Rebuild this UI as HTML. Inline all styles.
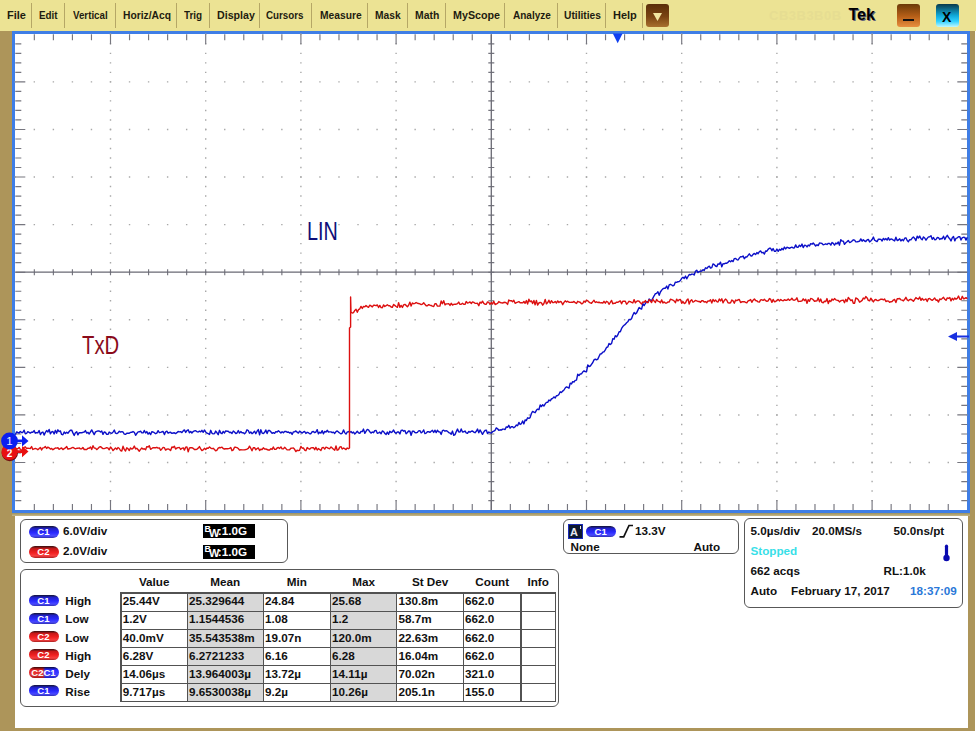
<!DOCTYPE html>
<html><head><meta charset="utf-8">
<style>
*{margin:0;padding:0;box-sizing:border-box}
html,body{width:976px;height:732px;overflow:hidden;background:#fff}
body{position:relative;font-family:"Liberation Sans",sans-serif;color:#000}
.a{position:absolute}
.mi{position:absolute;top:9px;font-size:11px;font-weight:bold;line-height:13px;color:#1e1c10;white-space:nowrap;transform:scaleX(0.9);transform-origin:0 0}
.sep{position:absolute;top:3px;width:1px;height:25px;background:#b5a766}
.btn{position:absolute;top:4px;width:23px;height:23px;border-radius:3px}
.panel{position:absolute;border:1.4px solid #585858;border-radius:6px}
.b{position:absolute;font-weight:bold;font-size:11.7px;line-height:13px;white-space:nowrap;color:#111}
.pill{position:absolute;left:28.5px;width:30px;height:11px;border-radius:6px;color:#fff;font-weight:bold;font-size:9.5px;line-height:11px;text-align:center;letter-spacing:0.3px}
.pb{background:linear-gradient(#141430 0%,#2020c8 22%,#2828ff 55%,#4a4aff 82%,#3030b0 100%)}
.pr{background:linear-gradient(#301010 0%,#c81818 22%,#f02020 55%,#f84040 82%,#a82020 100%)}
.vl{position:absolute;width:1.4px;background:#525252}
.hl{position:absolute;height:1.4px;background:#525252}
.gray{position:absolute;background:#d8d8d8}
</style></head><body>
<div class="a" style="left:0;top:0;width:976px;height:31px;background:#ece394"></div>
<!-- brown frame -->
<div class="a" style="left:0;top:31px;width:12px;height:700px;background:#ad955a"></div>
<div class="a" style="left:0;top:513px;width:15px;height:218px;background:#ad955a"></div>
<div class="a" style="left:970px;top:31px;width:5px;height:700px;background:#ad955a"></div>
<div class="a" style="left:967.5px;top:513px;width:7.5px;height:218px;background:#ad955a"></div>
<div class="a" style="left:0;top:727.7px;width:975px;height:3.1px;background:#ad955a"></div>
<!-- blue graticule frame -->
<div class="a" style="left:12px;top:31px;width:958px;height:482px;border:3px solid #3f7ee6;background:#fff"></div>
<div class="a" style="left:12px;top:513px;width:958px;height:2.5px;background:linear-gradient(#9a9060,#c8b888)"></div>

<!-- menu -->
<span class="mi" style="left:7px;transform:scaleX(1.0)">File</span>
<div class="sep" style="left:31px"></div>
<span class="mi" style="left:39px;transform:scaleX(0.895)">Edit</span>
<div class="sep" style="left:64px"></div>
<span class="mi" style="left:72.5px;transform:scaleX(0.885)">Vertical</span>
<div class="sep" style="left:115px"></div>
<span class="mi" style="left:123px;transform:scaleX(0.934)">Horiz/Acq</span>
<div class="sep" style="left:176px"></div>
<span class="mi" style="left:184px;transform:scaleX(0.9)">Trig</span>
<div class="sep" style="left:209px"></div>
<span class="mi" style="left:216.5px;transform:scaleX(0.966)">Display</span>
<div class="sep" style="left:259px"></div>
<span class="mi" style="left:265.5px;transform:scaleX(0.89)">Cursors</span>
<div class="sep" style="left:311px"></div>
<span class="mi" style="left:319.5px;transform:scaleX(0.935)">Measure</span>
<div class="sep" style="left:367px"></div>
<span class="mi" style="left:375px;transform:scaleX(0.93)">Mask</span>
<div class="sep" style="left:407px"></div>
<span class="mi" style="left:415px;transform:scaleX(0.945)">Math</span>
<div class="sep" style="left:445px"></div>
<span class="mi" style="left:453px;transform:scaleX(0.975)">MyScope</span>
<div class="sep" style="left:504px"></div>
<span class="mi" style="left:512.5px;transform:scaleX(0.912)">Analyze</span>
<div class="sep" style="left:557px"></div>
<span class="mi" style="left:563.5px;transform:scaleX(0.93)">Utilities</span>
<div class="sep" style="left:605px"></div>
<span class="mi" style="left:613px;transform:scaleX(1.0)">Help</span>
<div class="sep" style="left:642px"></div>
<div class="btn" style="left:646px;width:23px;background:linear-gradient(#5a2e08,#7a4412 55%,#a8702e)"></div>
<svg class="a" style="left:646px;top:4px" width="23" height="23"><path d="M7 9h9l-4.5 8z" fill="#f2e6a0"/></svg>
<span class="a" style="left:769px;top:8px;font-size:13px;font-weight:bold;color:#e6dd92;letter-spacing:0.5px">CB3B3B0B</span>
<span class="a" style="left:848.5px;top:6.3px;font-size:16px;font-weight:bold;color:#000;text-shadow:1px 1px 0 #60607a">Tek</span>
<div class="btn" style="left:897px;background:linear-gradient(#6b3a08,#b86018 55%,#e89040)"></div>
<div class="a" style="left:903px;top:18.8px;width:11px;height:2.2px;background:#111"></div>
<div class="btn" style="left:936px;background:linear-gradient(#0a3a4a,#10a8d8 50%,#30d0ff 75%,#c0f8ff)"></div>
<span class="a" style="left:942px;top:8.5px;font-size:14px;font-weight:bold;color:#000">X</span>

<!-- graticule svg -->
<svg class="a" style="left:0;top:0" width="976" height="732">
<path d="M110.50 33.60V510.10M205.70 33.60V510.10M300.90 33.60V510.10M396.10 33.60V510.10M586.50 33.60V510.10M681.70 33.60V510.10M776.90 33.60V510.10M872.10 33.60V510.10" stroke="#a8a8a8" stroke-width="1.4" stroke-dasharray="1.4 8.116" fill="none"/>
<path d="M14.60 81.88H967.30M14.60 129.46H967.30M14.60 177.04H967.30M14.60 224.62H967.30M14.60 319.78H967.30M14.60 367.36H967.30M14.60 414.94H967.30M14.60 462.52H967.30" stroke="#a8a8a8" stroke-width="1.4" stroke-dasharray="1.4 17.640" fill="none"/>
<path d="M34.34 34.3v6M34.34 510.1v-6M34.34 269.20v6M53.38 34.3v6M53.38 510.1v-6M53.38 269.20v6M72.42 34.3v6M72.42 510.1v-6M72.42 269.20v6M91.46 34.3v6M91.46 510.1v-6M91.46 269.20v6M110.50 34.3v10M110.50 510.1v-10M110.50 269.20v6M129.54 34.3v6M129.54 510.1v-6M129.54 269.20v6M148.58 34.3v6M148.58 510.1v-6M148.58 269.20v6M167.62 34.3v6M167.62 510.1v-6M167.62 269.20v6M186.66 34.3v6M186.66 510.1v-6M186.66 269.20v6M205.70 34.3v10M205.70 510.1v-10M205.70 269.20v6M224.74 34.3v6M224.74 510.1v-6M224.74 269.20v6M243.78 34.3v6M243.78 510.1v-6M243.78 269.20v6M262.82 34.3v6M262.82 510.1v-6M262.82 269.20v6M281.86 34.3v6M281.86 510.1v-6M281.86 269.20v6M300.90 34.3v10M300.90 510.1v-10M300.90 269.20v6M319.94 34.3v6M319.94 510.1v-6M319.94 269.20v6M338.98 34.3v6M338.98 510.1v-6M338.98 269.20v6M358.02 34.3v6M358.02 510.1v-6M358.02 269.20v6M377.06 34.3v6M377.06 510.1v-6M377.06 269.20v6M396.10 34.3v10M396.10 510.1v-10M396.10 269.20v6M415.14 34.3v6M415.14 510.1v-6M415.14 269.20v6M434.18 34.3v6M434.18 510.1v-6M434.18 269.20v6M453.22 34.3v6M453.22 510.1v-6M453.22 269.20v6M472.26 34.3v6M472.26 510.1v-6M472.26 269.20v6M491.30 34.3v10M491.30 510.1v-10M491.30 269.20v6M510.34 34.3v6M510.34 510.1v-6M510.34 269.20v6M529.38 34.3v6M529.38 510.1v-6M529.38 269.20v6M548.42 34.3v6M548.42 510.1v-6M548.42 269.20v6M567.46 34.3v6M567.46 510.1v-6M567.46 269.20v6M586.50 34.3v10M586.50 510.1v-10M586.50 269.20v6M605.54 34.3v6M605.54 510.1v-6M605.54 269.20v6M624.58 34.3v6M624.58 510.1v-6M624.58 269.20v6M643.62 34.3v6M643.62 510.1v-6M643.62 269.20v6M662.66 34.3v6M662.66 510.1v-6M662.66 269.20v6M681.70 34.3v10M681.70 510.1v-10M681.70 269.20v6M700.74 34.3v6M700.74 510.1v-6M700.74 269.20v6M719.78 34.3v6M719.78 510.1v-6M719.78 269.20v6M738.82 34.3v6M738.82 510.1v-6M738.82 269.20v6M757.86 34.3v6M757.86 510.1v-6M757.86 269.20v6M776.90 34.3v10M776.90 510.1v-10M776.90 269.20v6M795.94 34.3v6M795.94 510.1v-6M795.94 269.20v6M814.98 34.3v6M814.98 510.1v-6M814.98 269.20v6M834.02 34.3v6M834.02 510.1v-6M834.02 269.20v6M853.06 34.3v6M853.06 510.1v-6M853.06 269.20v6M872.10 34.3v10M872.10 510.1v-10M872.10 269.20v6M891.14 34.3v6M891.14 510.1v-6M891.14 269.20v6M910.18 34.3v6M910.18 510.1v-6M910.18 269.20v6M929.22 34.3v6M929.22 510.1v-6M929.22 269.20v6M948.26 34.3v6M948.26 510.1v-6M948.26 269.20v6M15.3 43.82h6M967.3 43.82h-6M488.30 43.82h6M15.3 53.33h6M967.3 53.33h-6M488.30 53.33h6M15.3 62.85h6M967.3 62.85h-6M488.30 62.85h6M15.3 72.36h6M967.3 72.36h-6M488.30 72.36h6M15.3 81.88h10M967.3 81.88h-10M488.30 81.88h6M15.3 91.40h6M967.3 91.40h-6M488.30 91.40h6M15.3 100.91h6M967.3 100.91h-6M488.30 100.91h6M15.3 110.43h6M967.3 110.43h-6M488.30 110.43h6M15.3 119.94h6M967.3 119.94h-6M488.30 119.94h6M15.3 129.46h10M967.3 129.46h-10M488.30 129.46h6M15.3 138.98h6M967.3 138.98h-6M488.30 138.98h6M15.3 148.49h6M967.3 148.49h-6M488.30 148.49h6M15.3 158.01h6M967.3 158.01h-6M488.30 158.01h6M15.3 167.52h6M967.3 167.52h-6M488.30 167.52h6M15.3 177.04h10M967.3 177.04h-10M488.30 177.04h6M15.3 186.56h6M967.3 186.56h-6M488.30 186.56h6M15.3 196.07h6M967.3 196.07h-6M488.30 196.07h6M15.3 205.59h6M967.3 205.59h-6M488.30 205.59h6M15.3 215.10h6M967.3 215.10h-6M488.30 215.10h6M15.3 224.62h10M967.3 224.62h-10M488.30 224.62h6M15.3 234.14h6M967.3 234.14h-6M488.30 234.14h6M15.3 243.65h6M967.3 243.65h-6M488.30 243.65h6M15.3 253.17h6M967.3 253.17h-6M488.30 253.17h6M15.3 262.68h6M967.3 262.68h-6M488.30 262.68h6M15.3 272.20h10M967.3 272.20h-10M488.30 272.20h6M15.3 281.72h6M967.3 281.72h-6M488.30 281.72h6M15.3 291.23h6M967.3 291.23h-6M488.30 291.23h6M15.3 300.75h6M967.3 300.75h-6M488.30 300.75h6M15.3 310.26h6M967.3 310.26h-6M488.30 310.26h6M15.3 319.78h10M967.3 319.78h-10M488.30 319.78h6M15.3 329.30h6M967.3 329.30h-6M488.30 329.30h6M15.3 338.81h6M967.3 338.81h-6M488.30 338.81h6M15.3 348.33h6M967.3 348.33h-6M488.30 348.33h6M15.3 357.84h6M967.3 357.84h-6M488.30 357.84h6M15.3 367.36h10M967.3 367.36h-10M488.30 367.36h6M15.3 376.88h6M967.3 376.88h-6M488.30 376.88h6M15.3 386.39h6M967.3 386.39h-6M488.30 386.39h6M15.3 395.91h6M967.3 395.91h-6M488.30 395.91h6M15.3 405.42h6M967.3 405.42h-6M488.30 405.42h6M15.3 414.94h10M967.3 414.94h-10M488.30 414.94h6M15.3 424.46h6M967.3 424.46h-6M488.30 424.46h6M15.3 433.97h6M967.3 433.97h-6M488.30 433.97h6M15.3 443.49h6M967.3 443.49h-6M488.30 443.49h6M15.3 453.00h6M967.3 453.00h-6M488.30 453.00h6M15.3 462.52h10M967.3 462.52h-10M488.30 462.52h6M15.3 472.04h6M967.3 472.04h-6M488.30 472.04h6M15.3 481.55h6M967.3 481.55h-6M488.30 481.55h6M15.3 491.07h6M967.3 491.07h-6M488.30 491.07h6M15.3 500.58h6M967.3 500.58h-6M488.30 500.58h6" stroke="#76767f" stroke-width="1.15" fill="none"/>
<path d="M15.3 272.20H967.3M491.30 34.3V510.1" stroke="#6a6a74" stroke-width="1.3" fill="none"/>
<polyline points="15.3,434.7 16.6,431.9 17.8,432.5 19.1,433.0 20.3,431.5 21.6,432.5 22.8,432.5 24.1,430.2 25.3,433.8 26.6,433.3 27.8,431.7 29.1,432.3 30.3,433.1 31.6,432.1 32.8,432.2 34.1,430.6 35.3,433.2 36.6,432.6 37.8,432.8 39.1,430.5 40.4,434.6 41.6,432.7 42.9,432.0 44.1,435.1 45.4,432.4 46.6,430.6 47.9,431.9 49.1,429.5 50.4,433.8 51.6,431.9 52.9,431.5 54.1,433.9 55.4,430.3 56.6,433.2 57.9,429.8 59.1,431.6 60.4,430.9 61.6,434.4 62.9,434.7 64.2,432.0 65.4,433.5 66.7,432.2 67.9,433.2 69.2,431.5 70.4,430.2 71.7,430.1 72.9,432.9 74.2,435.4 75.4,432.8 76.7,431.8 77.9,434.9 79.2,432.7 80.4,432.6 81.7,432.8 82.9,432.3 84.2,432.0 85.4,430.6 86.7,433.1 88.0,432.3 89.2,434.0 90.5,431.9 91.7,429.9 93.0,432.3 94.2,434.6 95.5,431.9 96.7,431.3 98.0,430.9 99.2,431.0 100.5,432.0 101.7,430.9 103.0,434.4 104.2,432.0 105.5,432.5 106.7,434.3 108.0,434.4 109.2,432.1 110.5,432.8 111.8,433.4 113.0,432.1 114.3,430.1 115.5,433.2 116.8,433.6 118.0,432.9 119.3,431.2 120.5,432.1 121.8,431.6 123.0,432.0 124.3,434.1 125.5,434.4 126.8,433.3 128.0,433.1 129.3,433.3 130.5,432.4 131.8,432.3 133.0,431.5 134.3,432.3 135.6,435.3 136.8,433.5 138.1,431.9 139.3,431.8 140.6,431.2 141.8,432.9 143.1,432.9 144.3,430.5 145.6,433.0 146.8,431.6 148.1,434.2 149.3,432.6 150.6,434.6 151.8,431.8 153.1,432.0 154.3,432.7 155.6,433.7 156.8,433.1 158.1,430.7 159.4,432.6 160.6,432.4 161.9,431.8 163.1,431.5 164.4,434.6 165.6,431.8 166.9,431.2 168.1,433.2 169.4,432.5 170.6,432.2 171.9,433.4 173.1,433.0 174.4,432.8 175.6,433.6 176.9,432.7 178.1,431.5 179.4,431.9 180.6,431.6 181.9,432.6 183.2,430.9 184.4,429.9 185.7,432.4 186.9,430.6 188.2,429.8 189.4,432.8 190.7,431.4 191.9,433.0 193.2,431.6 194.4,430.9 195.7,430.7 196.9,431.6 198.2,432.0 199.4,431.2 200.7,431.9 201.9,430.3 203.2,432.3 204.4,430.0 205.7,432.0 207.0,433.2 208.2,433.7 209.5,434.5 210.7,430.3 212.0,433.3 213.2,433.9 214.5,433.6 215.7,431.1 217.0,432.8 218.2,434.7 219.5,430.3 220.7,432.9 222.0,433.7 223.2,431.4 224.5,433.0 225.7,430.9 227.0,431.2 228.2,431.2 229.5,432.5 230.8,432.2 232.0,433.5 233.3,431.0 234.5,432.1 235.8,433.5 237.0,433.0 238.3,430.5 239.5,433.1 240.8,431.6 242.0,432.8 243.3,432.7 244.5,433.8 245.8,432.4 247.0,429.8 248.3,430.5 249.5,433.2 250.8,431.9 252.0,433.7 253.3,432.6 254.6,431.3 255.8,433.7 257.1,431.2 258.3,429.6 259.6,434.9 260.8,429.8 262.1,433.1 263.3,433.5 264.6,432.4 265.8,430.0 267.1,433.6 268.3,430.4 269.6,430.5 270.8,431.8 272.1,433.3 273.3,432.6 274.6,433.3 275.8,431.6 277.1,432.0 278.4,430.7 279.6,431.8 280.9,433.0 282.1,431.8 283.4,432.8 284.6,431.5 285.9,431.4 287.1,432.3 288.4,432.0 289.6,433.0 290.9,432.4 292.1,434.5 293.4,431.9 294.6,431.9 295.9,430.9 297.1,432.2 298.4,433.1 299.6,431.2 300.9,432.1 302.2,433.1 303.4,432.0 304.7,431.5 305.9,433.5 307.2,432.3 308.4,432.7 309.7,433.7 310.9,433.7 312.2,431.7 313.4,431.5 314.7,432.6 315.9,432.0 317.2,429.7 318.4,433.8 319.7,432.2 320.9,433.1 322.2,430.7 323.4,433.8 324.7,431.4 326.0,432.0 327.2,430.3 328.5,432.0 329.7,431.9 331.0,431.9 332.2,432.7 333.5,432.2 334.7,433.4 336.0,431.6 337.2,430.9 338.5,432.1 339.7,433.0 341.0,433.8 342.2,433.2 343.5,429.9 344.7,432.6 346.0,434.1 347.2,432.2 348.5,431.5 349.8,432.5 351.0,431.5 352.3,433.0 353.5,432.1 354.8,434.0 356.0,432.8 357.3,431.2 358.5,432.9 359.8,433.4 361.0,431.4 362.3,431.6 363.5,429.1 364.8,433.3 366.0,431.4 367.3,429.4 368.5,429.8 369.8,431.8 371.0,433.1 372.3,432.0 373.6,432.7 374.8,430.7 376.1,430.4 377.3,433.3 378.6,432.8 379.8,432.1 381.1,433.8 382.3,430.9 383.6,431.6 384.8,433.4 386.1,434.5 387.3,432.1 388.6,434.3 389.8,431.3 391.1,432.5 392.3,431.9 393.6,430.0 394.8,432.4 396.1,433.3 397.4,431.9 398.6,432.0 399.9,433.9 401.1,430.5 402.4,430.1 403.6,431.2 404.9,430.5 406.1,433.8 407.4,432.5 408.6,431.0 409.9,431.3 411.1,435.3 412.4,431.3 413.6,431.1 414.9,432.5 416.1,432.9 417.4,432.4 418.6,430.9 419.9,430.6 421.2,432.8 422.4,432.0 423.7,429.9 424.9,433.6 426.2,433.1 427.4,431.8 428.7,431.7 429.9,432.4 431.2,431.2 432.4,430.3 433.7,432.5 434.9,430.2 436.2,432.6 437.4,430.2 438.7,431.9 439.9,431.9 441.2,434.4 442.4,430.7 443.7,430.2 445.0,431.2 446.2,430.6 447.5,431.3 448.7,432.6 450.0,433.0 451.2,434.2 452.5,431.1 453.7,435.3 455.0,434.6 456.2,431.8 457.5,429.1 458.7,431.9 460.0,432.1 461.2,429.0 462.5,432.1 463.7,431.8 465.0,431.0 466.2,432.8 467.5,433.3 468.8,431.4 470.0,432.3 471.3,431.2 472.5,431.0 473.8,432.1 475.0,432.7 476.3,431.3 477.5,429.1 478.8,432.8 480.0,429.9 481.3,432.2 482.5,434.3 483.8,432.0 485.0,430.5 486.3,430.1 487.5,433.5 488.8,432.0 490.0,432.7 491.3,433.1 492.6,431.7 493.8,431.2 495.1,430.3 496.3,427.9 497.6,428.8 498.8,430.3 500.1,429.8 501.3,430.1 502.6,429.1 503.8,429.1 505.1,429.5 506.3,426.9 507.6,427.4 508.8,425.3 510.1,428.2 511.3,426.6 512.6,426.8 513.8,427.8 515.1,426.8 516.4,425.0 517.6,425.7 518.9,422.4 520.1,424.5 521.4,423.7 522.6,421.0 523.9,423.9 525.1,420.0 526.4,420.5 527.6,417.8 528.9,418.4 530.1,417.6 531.4,413.5 532.6,411.4 533.9,412.2 535.1,412.7 536.4,410.3 537.6,409.1 538.9,409.7 540.2,405.0 541.4,406.5 542.7,404.8 543.9,406.1 545.2,403.9 546.4,402.4 547.7,402.4 548.9,400.0 550.2,400.8 551.4,399.0 552.7,398.4 553.9,396.9 555.2,398.0 556.4,395.7 557.7,395.5 558.9,394.5 560.2,391.8 561.4,392.5 562.7,391.1 564.0,390.0 565.2,388.0 566.5,386.9 567.7,387.4 569.0,388.2 570.2,383.2 571.5,383.9 572.7,381.6 574.0,382.0 575.2,380.4 576.5,380.1 577.7,374.3 579.0,375.6 580.2,374.0 581.5,373.9 582.7,372.0 584.0,370.9 585.2,371.5 586.5,371.9 587.8,365.0 589.0,366.5 590.3,366.0 591.5,364.3 592.8,362.5 594.0,359.9 595.3,359.1 596.5,359.9 597.8,359.1 599.0,356.5 600.3,353.9 601.5,353.8 602.8,352.1 604.0,351.8 605.3,349.9 606.5,347.5 607.8,346.9 609.0,343.5 610.3,344.5 611.6,343.4 612.8,338.7 614.1,339.2 615.3,335.7 616.6,336.8 617.8,334.9 619.1,331.8 620.3,331.8 621.6,328.4 622.8,326.6 624.1,325.3 625.3,324.4 626.6,322.7 627.8,321.8 629.1,319.4 630.3,319.7 631.6,318.6 632.8,315.2 634.1,312.5 635.4,313.9 636.6,312.9 637.9,310.1 639.1,307.5 640.4,308.5 641.6,309.1 642.9,303.6 644.1,305.6 645.4,303.5 646.6,301.7 647.9,302.4 649.1,299.0 650.4,300.1 651.6,300.5 652.9,298.1 654.1,295.8 655.4,293.7 656.6,293.4 657.9,291.8 659.2,295.3 660.4,292.0 661.7,290.1 662.9,288.8 664.2,288.2 665.4,288.2 666.7,286.1 667.9,289.0 669.2,284.9 670.4,284.3 671.7,285.0 672.9,285.9 674.2,285.1 675.4,282.1 676.7,282.4 677.9,281.7 679.2,281.5 680.4,280.5 681.7,278.3 683.0,277.3 684.2,278.5 685.5,276.1 686.7,278.8 688.0,276.5 689.2,274.5 690.5,274.9 691.7,274.1 693.0,274.1 694.2,275.0 695.5,271.3 696.7,270.2 698.0,272.6 699.2,271.4 700.5,271.3 701.7,271.1 703.0,269.7 704.2,270.5 705.5,267.8 706.8,268.5 708.0,267.0 709.3,266.2 710.5,268.0 711.8,267.6 713.0,263.9 714.3,264.6 715.5,266.0 716.8,266.6 718.0,263.9 719.3,264.2 720.5,262.2 721.8,266.8 723.0,263.8 724.3,263.9 725.5,263.2 726.8,263.2 728.0,262.4 729.3,260.7 730.6,261.7 731.8,260.5 733.1,261.6 734.3,258.6 735.6,258.4 736.8,259.6 738.1,260.0 739.3,258.1 740.6,256.6 741.8,256.9 743.1,256.0 744.3,258.7 745.6,257.0 746.8,257.0 748.1,255.4 749.3,253.8 750.6,255.7 751.8,256.0 753.1,254.4 754.4,253.4 755.6,254.6 756.9,252.5 758.1,253.7 759.4,251.6 760.6,251.0 761.9,252.8 763.1,252.3 764.4,254.1 765.6,251.0 766.9,251.2 768.1,249.4 769.4,248.3 770.6,248.2 771.9,250.8 773.1,248.5 774.4,251.3 775.6,251.4 776.9,249.0 778.2,251.3 779.4,249.3 780.7,250.3 781.9,248.4 783.2,249.7 784.4,247.1 785.7,248.9 786.9,247.3 788.2,247.6 789.4,248.4 790.7,247.6 791.9,247.1 793.2,248.0 794.4,247.9 795.7,244.9 796.9,247.2 798.2,247.2 799.4,245.2 800.7,246.5 802.0,244.1 803.2,247.6 804.5,245.3 805.7,245.4 807.0,246.9 808.2,245.1 809.5,245.9 810.7,243.7 812.0,244.2 813.2,243.0 814.5,244.5 815.7,246.0 817.0,244.8 818.2,245.6 819.5,243.0 820.7,243.1 822.0,243.5 823.2,244.7 824.5,244.4 825.8,243.8 827.0,244.5 828.3,243.4 829.5,243.4 830.8,245.1 832.0,242.5 833.3,243.4 834.5,245.1 835.8,243.1 837.0,243.8 838.3,242.0 839.5,245.2 840.8,239.7 842.0,241.0 843.3,241.1 844.5,244.4 845.8,242.7 847.0,241.8 848.3,240.4 849.6,242.5 850.8,242.1 852.1,240.9 853.3,239.8 854.6,240.2 855.8,241.8 857.1,241.9 858.3,241.5 859.6,241.1 860.8,238.9 862.1,241.2 863.3,239.7 864.6,241.0 865.8,241.5 867.1,239.9 868.3,239.4 869.6,241.9 870.8,241.0 872.1,239.6 873.4,237.1 874.6,240.2 875.9,241.0 877.1,241.6 878.4,239.2 879.6,239.2 880.9,239.4 882.1,241.0 883.4,238.4 884.6,239.7 885.9,238.6 887.1,240.1 888.4,237.7 889.6,240.1 890.9,238.9 892.1,239.2 893.4,240.2 894.6,240.9 895.9,237.2 897.2,240.6 898.4,240.0 899.7,238.8 900.9,241.0 902.2,239.4 903.4,240.7 904.7,238.2 905.9,237.8 907.2,240.5 908.4,241.7 909.7,239.6 910.9,239.9 912.2,238.1 913.4,237.0 914.7,238.4 915.9,240.6 917.2,236.2 918.4,238.0 919.7,236.1 921.0,238.7 922.2,239.7 923.5,236.9 924.7,238.0 926.0,240.2 927.2,238.4 928.5,236.9 929.7,236.8 931.0,235.8 932.2,239.4 933.5,237.5 934.7,239.8 936.0,239.5 937.2,237.5 938.5,237.7 939.7,239.4 941.0,238.5 942.2,238.7 943.5,236.2 944.8,239.5 946.0,237.1 947.3,235.3 948.5,237.4 949.8,238.8 951.0,240.9 952.3,237.7 953.5,236.4 954.8,240.9 956.0,238.3 957.3,237.8 958.5,236.7 959.8,236.8 961.0,240.0 962.3,237.7 963.5,237.3 964.8,237.4 966.0,240.1 967.3,237.2" stroke="#0c10c8" stroke-width="1.4" fill="none" stroke-linejoin="round"/>
<polyline points="15.3,449.3 16.6,448.8 17.8,448.8 19.1,447.4 20.3,449.4 21.6,450.6 22.8,448.4 24.1,447.3 25.3,446.8 26.6,448.7 27.8,448.1 29.1,448.4 30.3,448.5 31.6,446.6 32.8,449.5 34.1,448.8 35.3,448.4 36.6,448.8 37.8,449.7 39.1,448.6 40.4,447.4 41.6,450.0 42.9,447.9 44.1,447.6 45.4,446.5 46.6,448.5 47.9,447.1 49.1,447.8 50.4,449.1 51.6,448.5 52.9,449.8 54.1,448.9 55.4,448.0 56.6,448.1 57.9,447.8 59.1,449.3 60.4,448.5 61.6,448.0 62.9,449.6 64.2,448.6 65.4,447.9 66.7,446.5 67.9,449.1 69.2,448.8 70.4,448.6 71.7,447.9 72.9,447.4 74.2,448.2 75.4,448.8 76.7,448.3 77.9,448.3 79.2,447.9 80.4,448.9 81.7,448.8 82.9,447.5 84.2,449.5 85.4,449.5 86.7,449.6 88.0,448.3 89.2,448.2 90.5,447.0 91.7,449.5 93.0,445.7 94.2,448.0 95.5,448.1 96.7,449.6 98.0,448.5 99.2,447.2 100.5,446.6 101.7,447.6 103.0,448.6 104.2,448.6 105.5,448.2 106.7,447.6 108.0,448.2 109.2,449.8 110.5,447.1 111.8,448.5 113.0,450.6 114.3,449.2 115.5,447.9 116.8,449.4 118.0,447.5 119.3,448.5 120.5,450.5 121.8,451.0 123.0,446.3 124.3,449.4 125.5,451.0 126.8,447.8 128.0,448.8 129.3,450.5 130.5,447.9 131.8,449.1 133.0,448.4 134.3,446.0 135.6,448.9 136.8,448.3 138.1,449.7 139.3,451.2 140.6,449.4 141.8,448.0 143.1,449.1 144.3,448.8 145.6,449.8 146.8,446.6 148.1,447.0 149.3,445.8 150.6,449.3 151.8,448.5 153.1,447.7 154.3,447.6 155.6,447.8 156.8,447.3 158.1,448.1 159.4,447.9 160.6,450.3 161.9,448.9 163.1,447.4 164.4,447.7 165.6,450.1 166.9,449.1 168.1,448.9 169.4,449.4 170.6,450.6 171.9,446.9 173.1,447.5 174.4,446.2 175.6,449.1 176.9,448.0 178.1,447.6 179.4,447.5 180.6,449.4 181.9,448.3 183.2,447.8 184.4,450.1 185.7,447.1 186.9,446.9 188.2,451.8 189.4,448.0 190.7,447.8 191.9,447.6 193.2,448.3 194.4,449.5 195.7,449.5 196.9,449.2 198.2,448.1 199.4,446.6 200.7,448.9 201.9,450.5 203.2,449.9 204.4,448.3 205.7,449.5 207.0,448.0 208.2,448.4 209.5,446.9 210.7,448.1 212.0,448.7 213.2,448.3 214.5,449.5 215.7,450.9 217.0,450.2 218.2,448.1 219.5,447.5 220.7,447.7 222.0,447.2 223.2,448.5 224.5,449.0 225.7,448.7 227.0,448.8 228.2,448.7 229.5,448.3 230.8,447.5 232.0,450.7 233.3,449.9 234.5,447.3 235.8,447.3 237.0,447.7 238.3,448.5 239.5,450.1 240.8,449.8 242.0,449.9 243.3,449.9 244.5,449.9 245.8,449.5 247.0,449.1 248.3,448.3 249.5,446.2 250.8,448.3 252.0,450.8 253.3,447.8 254.6,447.7 255.8,449.8 257.1,448.6 258.3,447.9 259.6,450.5 260.8,449.3 262.1,449.5 263.3,447.8 264.6,449.1 265.8,449.0 267.1,449.5 268.3,450.0 269.6,450.0 270.8,448.7 272.1,449.4 273.3,447.0 274.6,449.3 275.8,449.4 277.1,448.0 278.4,447.5 279.6,448.4 280.9,446.9 282.1,448.9 283.4,448.9 284.6,447.3 285.9,448.6 287.1,449.9 288.4,449.9 289.6,449.8 290.9,448.3 292.1,448.1 293.4,448.0 294.6,449.3 295.9,451.6 297.1,450.3 298.4,450.6 299.6,450.3 300.9,446.4 302.2,448.2 303.4,447.9 304.7,450.1 305.9,450.7 307.2,447.6 308.4,448.6 309.7,449.2 310.9,447.9 312.2,447.7 313.4,447.6 314.7,449.7 315.9,447.3 317.2,450.0 318.4,448.6 319.7,449.5 320.9,450.5 322.2,447.6 323.4,447.4 324.7,449.1 326.0,447.2 327.2,447.6 328.5,448.4 329.7,448.7 331.0,446.9 332.2,448.0 333.5,449.3 334.7,450.2 336.0,446.0 337.2,450.2 338.5,449.6 339.7,447.1 341.0,446.6 342.2,449.0 343.5,448.0 344.7,448.7 346.0,449.6 347.2,448.0 348.5,448.7 349.5,448 349.5,328 350.6,327 350.6,297 351.0,312.2 352.3,313.0 353.5,312.6 354.8,310.4 356.0,309.3 357.3,312.3 358.5,309.6 359.8,308.8 361.0,306.4 362.3,308.5 363.5,306.4 364.8,306.8 366.0,305.6 367.3,306.6 368.5,307.3 369.8,305.2 371.0,305.9 372.3,306.9 373.6,305.3 374.8,305.3 376.1,305.7 377.3,304.9 378.6,307.5 379.8,305.4 381.1,307.6 382.3,307.7 383.6,304.9 384.8,306.5 386.1,305.7 387.3,304.8 388.6,305.8 389.8,305.8 391.1,307.0 392.3,307.4 393.6,304.5 394.8,305.4 396.1,306.5 397.4,307.3 398.6,302.6 399.9,307.3 401.1,305.4 402.4,307.5 403.6,304.9 404.9,304.4 406.1,305.4 407.4,306.8 408.6,305.3 409.9,302.1 411.1,306.0 412.4,303.0 413.6,303.7 414.9,303.4 416.1,302.5 417.4,303.2 418.6,303.5 419.9,303.9 421.2,304.6 422.4,304.2 423.7,302.7 424.9,304.3 426.2,305.8 427.4,305.7 428.7,304.6 429.9,305.2 431.2,305.5 432.4,306.1 433.7,306.5 434.9,303.8 436.2,303.8 437.4,306.1 438.7,306.1 439.9,306.1 441.2,301.0 442.4,303.7 443.7,300.7 445.0,304.9 446.2,303.9 447.5,303.9 448.7,303.6 450.0,305.4 451.2,303.3 452.5,305.0 453.7,304.4 455.0,304.1 456.2,304.2 457.5,303.7 458.7,302.1 460.0,304.4 461.2,304.3 462.5,303.2 463.7,304.3 465.0,304.4 466.2,301.6 467.5,303.0 468.8,302.6 470.0,301.9 471.3,303.5 472.5,301.9 473.8,302.4 475.0,303.3 476.3,303.4 477.5,303.3 478.8,305.7 480.0,302.1 481.3,303.1 482.5,301.2 483.8,303.4 485.0,304.3 486.3,304.3 487.5,301.9 488.8,302.4 490.0,304.4 491.3,302.6 492.6,304.0 493.8,301.4 495.1,304.5 496.3,304.0 497.6,303.3 498.8,301.6 500.1,302.5 501.3,302.8 502.6,303.0 503.8,302.5 505.1,302.3 506.3,302.9 507.6,304.4 508.8,300.0 510.1,300.8 511.3,300.6 512.6,301.7 513.8,300.3 515.1,303.3 516.4,302.7 517.6,302.2 518.9,301.6 520.1,302.7 521.4,302.7 522.6,302.9 523.9,301.5 525.1,303.3 526.4,300.6 527.6,304.1 528.9,299.2 530.1,301.7 531.4,300.9 532.6,303.5 533.9,300.5 535.1,304.8 536.4,300.4 537.6,305.0 538.9,303.0 540.2,302.4 541.4,302.9 542.7,305.2 543.9,303.5 545.2,299.4 546.4,303.9 547.7,302.6 548.9,300.2 550.2,303.3 551.4,300.7 552.7,302.5 553.9,302.6 555.2,301.4 556.4,303.1 557.7,300.9 558.9,302.5 560.2,301.5 561.4,302.0 562.7,304.7 564.0,302.4 565.2,300.8 566.5,302.0 567.7,301.2 569.0,302.2 570.2,302.4 571.5,302.3 572.7,302.3 574.0,301.4 575.2,302.7 576.5,303.5 577.7,301.3 579.0,302.0 580.2,302.2 581.5,303.7 582.7,303.5 584.0,301.1 585.2,302.2 586.5,300.1 587.8,300.8 589.0,302.1 590.3,302.9 591.5,303.3 592.8,301.6 594.0,300.3 595.3,302.5 596.5,301.8 597.8,302.5 599.0,302.2 600.3,302.9 601.5,302.8 602.8,303.0 604.0,301.3 605.3,303.2 606.5,301.3 607.8,302.0 609.0,304.3 610.3,302.4 611.6,300.4 612.8,303.8 614.1,303.2 615.3,303.3 616.6,302.1 617.8,302.3 619.1,301.5 620.3,300.9 621.6,303.8 622.8,301.3 624.1,301.2 625.3,301.2 626.6,304.2 627.8,302.9 629.1,301.3 630.3,301.7 631.6,302.4 632.8,302.9 634.1,299.6 635.4,302.9 636.6,301.4 637.9,300.8 639.1,301.2 640.4,302.7 641.6,304.0 642.9,301.9 644.1,302.4 645.4,300.6 646.6,302.3 647.9,302.7 649.1,299.7 650.4,301.0 651.6,302.6 652.9,299.3 654.1,301.1 655.4,302.4 656.6,299.4 657.9,301.1 659.2,301.6 660.4,302.7 661.7,299.9 662.9,303.0 664.2,301.9 665.4,303.1 666.7,303.0 667.9,301.9 669.2,302.1 670.4,299.2 671.7,299.7 672.9,300.2 674.2,301.0 675.4,302.7 676.7,299.1 677.9,301.0 679.2,299.7 680.4,299.4 681.7,303.3 683.0,301.5 684.2,303.5 685.5,302.9 686.7,300.2 688.0,298.9 689.2,304.0 690.5,300.8 691.7,299.8 693.0,302.2 694.2,301.5 695.5,300.4 696.7,300.8 698.0,301.5 699.2,301.4 700.5,302.3 701.7,300.8 703.0,300.8 704.2,302.0 705.5,301.6 706.8,302.7 708.0,300.9 709.3,301.1 710.5,299.7 711.8,303.1 713.0,299.4 714.3,301.4 715.5,300.0 716.8,301.6 718.0,302.1 719.3,299.0 720.5,300.9 721.8,298.8 723.0,302.9 724.3,300.5 725.5,299.1 726.8,300.2 728.0,302.8 729.3,303.0 730.6,302.7 731.8,300.0 733.1,300.9 734.3,303.2 735.6,300.1 736.8,300.6 738.1,299.8 739.3,299.5 740.6,302.6 741.8,301.8 743.1,301.6 744.3,301.7 745.6,302.3 746.8,302.9 748.1,300.9 749.3,300.5 750.6,299.6 751.8,302.3 753.1,300.2 754.4,298.9 755.6,300.5 756.9,300.9 758.1,301.9 759.4,302.1 760.6,299.9 761.9,299.8 763.1,300.4 764.4,299.2 765.6,300.6 766.9,301.4 768.1,300.8 769.4,298.6 770.6,299.2 771.9,302.4 773.1,299.4 774.4,301.7 775.6,301.5 776.9,300.3 778.2,299.4 779.4,300.9 780.7,299.5 781.9,300.4 783.2,300.8 784.4,299.7 785.7,300.3 786.9,300.2 788.2,299.0 789.4,300.3 790.7,299.7 791.9,298.2 793.2,300.1 794.4,300.2 795.7,299.7 796.9,297.8 798.2,301.5 799.4,301.4 800.7,301.3 802.0,300.9 803.2,298.8 804.5,300.6 805.7,299.2 807.0,303.3 808.2,299.7 809.5,301.3 810.7,298.4 812.0,298.8 813.2,299.7 814.5,301.3 815.7,301.0 817.0,300.7 818.2,297.9 819.5,301.8 820.7,299.1 822.0,302.4 823.2,302.7 824.5,301.3 825.8,301.5 827.0,298.6 828.3,303.5 829.5,300.5 830.8,301.5 832.0,299.1 833.3,300.1 834.5,298.6 835.8,299.8 837.0,300.2 838.3,300.5 839.5,301.9 840.8,300.7 842.0,300.4 843.3,300.1 844.5,302.7 845.8,299.3 847.0,301.6 848.3,297.5 849.6,298.9 850.8,300.6 852.1,299.8 853.3,303.3 854.6,303.2 855.8,298.0 857.1,298.6 858.3,299.8 859.6,302.2 860.8,301.4 862.1,300.4 863.3,298.1 864.6,298.8 865.8,296.6 867.1,297.9 868.3,300.4 869.6,300.9 870.8,298.2 872.1,300.0 873.4,301.9 874.6,300.0 875.9,299.4 877.1,300.6 878.4,300.5 879.6,299.9 880.9,299.1 882.1,299.2 883.4,299.9 884.6,299.0 885.9,301.5 887.1,300.9 888.4,301.1 889.6,302.3 890.9,301.7 892.1,301.5 893.4,300.1 894.6,299.4 895.9,302.6 897.2,298.7 898.4,298.8 899.7,298.5 900.9,299.9 902.2,300.1 903.4,300.9 904.7,299.3 905.9,297.3 907.2,299.9 908.4,300.8 909.7,299.6 910.9,299.3 912.2,300.2 913.4,301.3 914.7,299.4 915.9,297.6 917.2,298.7 918.4,299.2 919.7,297.1 921.0,300.4 922.2,298.4 923.5,300.0 924.7,299.6 926.0,299.0 927.2,301.5 928.5,298.6 929.7,298.5 931.0,299.7 932.2,300.4 933.5,299.3 934.7,298.0 936.0,300.2 937.2,300.0 938.5,302.0 939.7,299.0 941.0,299.5 942.2,298.5 943.5,297.3 944.8,299.3 946.0,300.3 947.3,297.9 948.5,298.3 949.8,297.6 951.0,300.9 952.3,298.3 953.5,299.9 954.8,298.0 956.0,299.2 957.3,298.3 958.5,296.0 959.8,299.2 961.0,299.7 962.3,296.3 963.5,298.8 964.8,298.5 966.0,297.6 967.3,298.7" stroke="#dc1010" stroke-width="1.4" fill="none" stroke-linejoin="round"/>
<path d="M612.8 33.5h9.8l-4.9 9.8z" fill="#1040f0"/>
<path d="M948 336.5l9-4.5v9z M956 335.5h13v2h-13z" fill="#1830e0"/>
<circle cx="9.8" cy="453" r="8.2" fill="#701010"/>
<circle cx="9.5" cy="452" r="8" fill="#e81010"/>
<path d="M17 450.3h5v-4.3l6.5 5.6-6.5 5.6v-4.3h-5z" fill="#e81010"/>
<text x="9.5" y="457" font-size="10" font-weight="bold" fill="#fff" text-anchor="middle" style="font-family:'Liberation Sans'">2</text>
<circle cx="9.5" cy="441" r="8.4" fill="#0a1ef0"/>
<path d="M17 439.6h5v-4.3l6.5 5.6-6.5 5.6v-4.3h-5z" fill="#0a1ef0"/>
<text x="9.5" y="445.2" font-size="11.5" fill="#e8ecff" text-anchor="middle" style="font-family:'Liberation Sans'">1</text>
</svg>
<span class="a" style="left:306.5px;top:216px;font-size:26px;line-height:30px;color:#0e0e78;transform:scaleX(0.76);transform-origin:0 0">LIN</span>
<span class="a" style="left:81.6px;top:329.5px;font-size:26px;line-height:30px;color:#8a0a1a;transform:scaleX(0.78);transform-origin:0 0">TxD</span>

<!-- channel panel -->
<div class="panel" style="left:19.5px;top:518.5px;width:268px;height:44.5px"></div>
<div class="pill pb" style="top:526px;height:12px;line-height:12px">C1</div>
<div class="pill pr" style="top:546px;height:12px;line-height:12px">C2</div>
<span class="b" style="left:63px;top:524.2px">6.0V/div</span>
<span class="b" style="left:63px;top:543.8px">2.0V/div</span>
<div class="a" style="left:203px;top:524.3px;width:52px;height:14px;background:#000"></div>
<div class="a" style="left:203px;top:544.6px;width:52px;height:14px;background:#000"></div>
<span class="a" style="left:204.5px;top:524.5px;font-size:8.8px;line-height:8px;font-weight:bold;color:#fff">B</span>
<span class="a" style="left:209px;top:527.5px;font-size:11px;line-height:11px;font-weight:bold;color:#fff">W</span>
<span class="b" style="left:217.8px;top:524.3px;color:#fff">:1.0G</span>
<span class="a" style="left:204.5px;top:544.8px;font-size:8.8px;line-height:8px;font-weight:bold;color:#fff">B</span>
<span class="a" style="left:209px;top:547.8px;font-size:11px;line-height:11px;font-weight:bold;color:#fff">W</span>
<span class="b" style="left:217.8px;top:544.6px;color:#fff">:1.0G</span>

<!-- trigger panel -->
<div class="panel" style="left:562.5px;top:518.5px;width:176.5px;height:35px"></div>
<div class="a" style="left:568px;top:524px;width:15px;height:15px;background:#0c1830;border:1px solid #1a2ab8"></div>
<span class="a" style="left:570px;top:525.5px;font-size:11px;line-height:13px;font-weight:bold;color:#e8e8f0">A</span>
<div class="a" style="left:579.5px;top:526px;width:1.5px;height:3px;background:#e8e8f0"></div>
<div class="pill pb" style="left:585.7px;top:526.2px;height:11px"></div>
<span class="a" style="left:585.7px;top:526.2px;width:30px;text-align:center;font-size:9.5px;line-height:11px;font-weight:bold;color:#fff">C1</span>
<svg class="a" style="left:616px;top:523px" width="20" height="17"><path d="M3.5 13.8h4.2l5.3-11.3h4" stroke="#111" stroke-width="1.7" fill="none"/></svg>
<span class="b" style="left:635px;top:524.2px">13.3V</span>
<span class="b" style="left:570.5px;top:540px">None</span>
<span class="b" style="left:693.5px;top:540px">Auto</span>

<!-- horizontal panel -->
<div class="panel" style="left:743.5px;top:518px;width:219.5px;height:89.5px"></div>
<span class="b" style="left:750.5px;top:524.2px">5.0µs/div</span>
<span class="b" style="left:812px;top:524.2px">20.0MS/s</span>
<span class="b" style="left:893.5px;top:524.2px">50.0ns/pt</span>
<span class="b" style="left:750.5px;top:544px;color:#38e0e8">Stopped</span>
<svg class="a" style="left:940px;top:542px" width="14" height="20"><path d="M6.5 4.2V14" stroke="#0a0ab0" stroke-width="3.2" stroke-linecap="round"/><circle cx="6.5" cy="16" r="3.2" fill="#0a0ab0"/></svg>
<span class="b" style="left:750.5px;top:564.2px">662 acqs</span>
<span class="b" style="left:883.5px;top:564.2px">RL:1.0k</span>
<span class="b" style="left:750.5px;top:584px">Auto</span>
<span class="b" style="left:791px;top:584px">February 17, 2017</span>
<span class="b" style="left:910px;top:584px;color:#2a78d8">18:37:09</span>

<!-- measurement panel -->
<div class="panel" style="left:19.5px;top:568.5px;width:539px;height:138px"></div>
<div class="gray" style="left:187.3px;top:593.10px;width:76.0px;height:108.60px"></div>
<div class="gray" style="left:330.4px;top:593.10px;width:66.4px;height:108.60px"></div>
<div class="vl" style="left:120.40px;top:592.40px;height:110.00px"></div>
<div class="vl" style="left:186.60px;top:592.40px;height:110.00px"></div>
<div class="vl" style="left:262.60px;top:592.40px;height:110.00px"></div>
<div class="vl" style="left:329.70px;top:592.40px;height:110.00px"></div>
<div class="vl" style="left:396.10px;top:592.40px;height:110.00px"></div>
<div class="vl" style="left:462.70px;top:592.40px;height:110.00px"></div>
<div class="vl" style="left:520.30px;top:592.40px;height:110.00px"></div>
<div class="vl" style="left:554.70px;top:592.40px;height:110.00px"></div>
<div class="hl" style="left:120.40px;top:592.40px;width:435.70px"></div>
<div class="hl" style="left:120.40px;top:610.50px;width:435.70px"></div>
<div class="hl" style="left:120.40px;top:628.60px;width:435.70px"></div>
<div class="hl" style="left:120.40px;top:646.70px;width:435.70px"></div>
<div class="hl" style="left:120.40px;top:664.80px;width:435.70px"></div>
<div class="hl" style="left:120.40px;top:682.90px;width:435.70px"></div>
<div class="hl" style="left:120.40px;top:701.00px;width:435.70px"></div>
<span class="b" style="left:114.2px;width:80px;text-align:center;top:574.6px">Value</span>
<span class="b" style="left:185.3px;width:80px;text-align:center;top:574.6px">Mean</span>
<span class="b" style="left:256.9px;width:80px;text-align:center;top:574.6px">Min</span>
<span class="b" style="left:323.6px;width:80px;text-align:center;top:574.6px">Max</span>
<span class="b" style="left:390.1px;width:80px;text-align:center;top:574.6px">St Dev</span>
<span class="b" style="left:452.2px;width:80px;text-align:center;top:574.6px">Count</span>
<span class="b" style="left:498.2px;width:80px;text-align:center;top:574.6px">Info</span>
<div class="pill pb" style="top:594.70px">C1</div>
<span class="b" style="left:65.3px;top:594.30px">High</span>
<span class="b" style="left:122.8px;top:594.30px">25.44V</span>
<span class="b" style="left:189.0px;top:594.30px">25.329644</span>
<span class="b" style="left:265.0px;top:594.30px">24.84</span>
<span class="b" style="left:332.1px;top:594.30px">25.68</span>
<span class="b" style="left:398.5px;top:594.30px">130.8m</span>
<span class="b" style="left:465.1px;top:594.30px">662.0</span>
<div class="pill pb" style="top:612.80px">C1</div>
<span class="b" style="left:65.3px;top:612.40px">Low</span>
<span class="b" style="left:122.8px;top:612.40px">1.2V</span>
<span class="b" style="left:189.0px;top:612.40px">1.1544536</span>
<span class="b" style="left:265.0px;top:612.40px">1.08</span>
<span class="b" style="left:332.1px;top:612.40px">1.2</span>
<span class="b" style="left:398.5px;top:612.40px">58.7m</span>
<span class="b" style="left:465.1px;top:612.40px">662.0</span>
<div class="pill pr" style="top:630.90px">C2</div>
<span class="b" style="left:65.3px;top:630.50px">Low</span>
<span class="b" style="left:122.8px;top:630.50px">40.0mV</span>
<span class="b" style="left:189.0px;top:630.50px">35.543538m</span>
<span class="b" style="left:265.0px;top:630.50px">19.07n</span>
<span class="b" style="left:332.1px;top:630.50px">120.0m</span>
<span class="b" style="left:398.5px;top:630.50px">22.63m</span>
<span class="b" style="left:465.1px;top:630.50px">662.0</span>
<div class="pill pr" style="top:649.00px">C2</div>
<span class="b" style="left:65.3px;top:648.60px">High</span>
<span class="b" style="left:122.8px;top:648.60px">6.28V</span>
<span class="b" style="left:189.0px;top:648.60px">6.2721233</span>
<span class="b" style="left:265.0px;top:648.60px">6.16</span>
<span class="b" style="left:332.1px;top:648.60px">6.28</span>
<span class="b" style="left:398.5px;top:648.60px">16.04m</span>
<span class="b" style="left:465.1px;top:648.60px">662.0</span>
<div class="pill" style="top:667.10px;background:linear-gradient(90deg,#e02020 45%,#2828ff 55%);font-size:9.5px;letter-spacing:0">C2C1</div>
<div class="pill" style="top:667.10px;background:linear-gradient(rgba(0,0,0,.8),rgba(0,0,0,0) 25%,rgba(255,255,255,.12) 70%,rgba(0,0,0,.25))"></div>
<span class="b" style="left:65.3px;top:666.70px">Dely</span>
<span class="b" style="left:122.8px;top:666.70px">14.06µs</span>
<span class="b" style="left:189.0px;top:666.70px">13.964003µ</span>
<span class="b" style="left:265.0px;top:666.70px">13.72µ</span>
<span class="b" style="left:332.1px;top:666.70px">14.11µ</span>
<span class="b" style="left:398.5px;top:666.70px">70.02n</span>
<span class="b" style="left:465.1px;top:666.70px">321.0</span>
<div class="pill pb" style="top:685.20px">C1</div>
<span class="b" style="left:65.3px;top:684.80px">Rise</span>
<span class="b" style="left:122.8px;top:684.80px">9.717µs</span>
<span class="b" style="left:189.0px;top:684.80px">9.6530038µ</span>
<span class="b" style="left:265.0px;top:684.80px">9.2µ</span>
<span class="b" style="left:332.1px;top:684.80px">10.26µ</span>
<span class="b" style="left:398.5px;top:684.80px">205.1n</span>
<span class="b" style="left:465.1px;top:684.80px">155.0</span>
</body></html>
